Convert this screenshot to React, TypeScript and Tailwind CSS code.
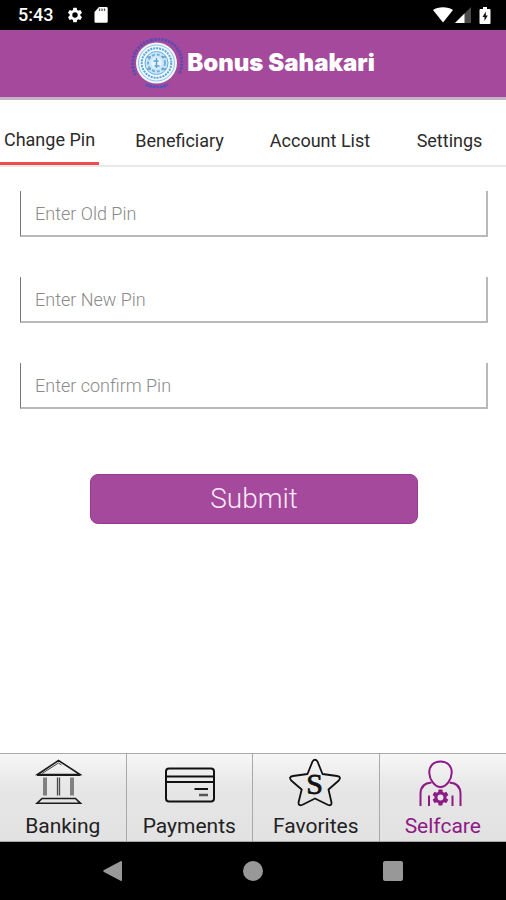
import type { ReactNode } from "react";

const tabs = ["Change Pin", "Beneficiary", "Account List", "Settings"];

const fields = [
  { id: "old-pin", label: "Enter Old Pin" },
  { id: "new-pin", label: "Enter New Pin" },
  { id: "confirm-pin", label: "Enter confirm Pin" },
];

const GEAR =
  "M19.14 12.94c.04-.3.06-.61.06-.94s-.02-.64-.07-.94l2.03-1.58a.49.49 0 0 0 .12-.61l-1.92-3.32a.49.49 0 0 0-.59-.22l-2.39.96a7 7 0 0 0-1.62-.94l-.36-2.54a.48.48 0 0 0-.48-.41h-3.84a.48.48 0 0 0-.47.41l-.36 2.54c-.59.24-1.13.57-1.62.94l-2.39-.96a.48.48 0 0 0-.59.22L2.74 8.87a.48.48 0 0 0 .12.61l2.03 1.58c-.05.3-.09.63-.09.94s.02.64.07.94l-2.03 1.58a.49.49 0 0 0-.12.61l1.92 3.32c.12.22.37.29.59.22l2.39-.96c.5.38 1.03.7 1.62.94l.36 2.54c.05.24.24.41.48.41h3.84c.24 0 .44-.17.47-.41l.36-2.54a7 7 0 0 0 1.62-.94l2.39.96c.22.08.47 0 .59-.22l1.92-3.32a.48.48 0 0 0-.12-.61zM12 15.6a3.6 3.6 0 1 1 0-7.2 3.6 3.6 0 0 1 0 7.2z";

function StatusBar() {
  return (
    <div className="flex h-[30px] items-center justify-between bg-black pr-[15px] pl-[18px] text-white">
      <div className="flex items-center">
        <span className="w-12 text-lg font-medium">5:43</span>
        <svg className="h-[18px] w-[18px]" viewBox="0 0 24 24" fill="currentColor" aria-hidden="true">
          <path d={GEAR} />
        </svg>
        <svg className="ml-[10px] h-[16px] w-[14px]" viewBox="0 0 14 16" aria-hidden="true">
          <path fill="currentColor" d="M5 0h7.500a1.200 1.200 0 0 1 1.200 1.200v13.400a1.200 1.200 0 0 1-1.200 1.200H1.700a1.200 1.200 0 0 1-1.200-1.200V5z" />
          <path stroke="#555" strokeWidth="1.300" d="M5.500 1.500v2.600M8 1.500v2.600M10.500 1.500v2.600" />
        </svg>
      </div>
      <div className="flex items-center">
        <svg className="h-[16px] w-[20px]" viewBox="0 0 20 16" fill="currentColor" aria-hidden="true">
          <path d="M10 15.500 0 3C5-.6 15-.6 20 3z" />
        </svg>
        <svg className="ml-[2px] h-[16px] w-[16px]" viewBox="0 0 16 16" aria-hidden="true">
          <path fill="#4a4a4a" d="M16 0v16H0z" />
          <path fill="currentColor" d="M9.500 6.500V16H0z" />
        </svg>
        <svg className="ml-2 h-[17px] w-[12px]" viewBox="0 0 12 17" aria-hidden="true">
          <path fill="currentColor" d="M4 0h4v2h2.500a1 1 0 0 1 1 1v13a1 1 0 0 1-1 1h-9a1 1 0 0 1-1-1V3a1 1 0 0 1 1-1H4z" />
          <path fill="#111" d="M6.800 4.500 3.500 10h2v4l3.300-5.500h-2z" />
        </svg>
      </div>
    </div>
  );
}

function Seal() {
  return (
    <svg className="h-[50px] w-[52px]" viewBox="0 0 52 50" fill="none" aria-hidden="true">
      <path d="M4.500 37A24 24 0 0 1 20 2.300" stroke="#5a4bb0" strokeWidth="3" strokeDasharray="2.200 1.300" />
      <path d="M20 2.300A23.500 23.500 0 0 1 48 36" stroke="#5a4bb0" strokeWidth="3" strokeDasharray="2.400 1.100" />
      <path d="M15 46.500a24 24 0 0 0 22 0" stroke="#4a55bd" strokeWidth="3" strokeDasharray="2.600 1" />
      <circle cx="25.500" cy="25" r="20.500" fill="#eef7fd" />
      <circle cx="25.500" cy="25" r="18" stroke="#8fc4e8" strokeWidth="1" />
      <circle cx="25.500" cy="25" r="14.800" stroke="#5ba6dc" strokeWidth="2" strokeDasharray="2 1" />
      <circle cx="25.500" cy="25" r="11.500" fill="#cde7f7" stroke="#69aede" strokeWidth="1" />
      <circle cx="25.500" cy="25" r="8.500" stroke="#6fb0de" strokeWidth="2" strokeDasharray="3 2" />
      <circle cx="25.500" cy="25" r="5.500" fill="#e4f3fb" />
      <path d="M25.500 20v10M22.500 23h5M23.500 28h5M16 19h4M31 19h4M16 31h4M31 31h4" stroke="#5c9fd6" strokeWidth="1.300" />
    </svg>
  );
}

function BankIcon() {
  return (
    <svg className="h-[50px] w-[60px]" viewBox="0 0 60 50" fill="none" stroke="#1c1c1c" aria-hidden="true">
      <path strokeWidth="1.600" d="M4.500 16.500 25.500 2.500 47 16.500z" />
      <path strokeWidth="1" stroke="#444" d="M9 15.500 25.500 5l3 2" />
      <path strokeWidth="2" d="M4 17h43.500" />
      <path strokeWidth="1.300" stroke="#4a4a4a" d="M11 19.500v18M13 19.500v18M24.500 19.500v18M26.500 19.500v18M38 19.500v18M40 19.500v18" />
      <path strokeWidth="1.600" d="M9 40.500h33.500l5 4.800H4z" />
    </svg>
  );
}

function CardIcon() {
  return (
    <svg className="h-[50px] w-[60px]" viewBox="0 0 60 50" fill="none" stroke="#111" aria-hidden="true">
      <rect x="7" y="10.500" width="48" height="33" rx="3" strokeWidth="2" />
      <path strokeWidth="2" d="M7 18.500h48M7 24h48M35.500 31H49" />
      <path stroke="#555" strokeWidth="2.500" d="M40 37h9" />
    </svg>
  );
}

function StarIcon() {
  return (
    <svg className="h-[50px] w-[60px]" viewBox="0 0 60 50" fill="none" stroke="#111" aria-hidden="true">
      <path
        strokeWidth="1.800"
        strokeLinejoin="round"
        d="M26.500 3.500q2.500-3.500 5 0l5 12.500 14.500 2q5 .8 1.500 4.800L42.500 31.500l3 13q.3 4-3.800 2.200L29 40.500l-12.500 6.200q-4 1.800-4-2.200l3.200-13L5.500 22.800q-3.500-4 1.500-4.800L21.500 16z"
      />
      <text x="28.500" y="36" textAnchor="middle" fill="#111" strokeWidth="0.800" className="font-['Liberation_Serif',serif] text-[30px]">
        S
      </text>
    </svg>
  );
}

function PersonIcon() {
  return (
    <svg className="h-[50px] w-[60px]" viewBox="0 0 60 50" fill="none" stroke="currentColor" strokeWidth="2" aria-hidden="true">
      <path d="M27.500 3.500c7.500 0 11.500 5 11.200 11.500C38.500 21.500 33.500 29 27.500 29S16.500 21.500 16.300 15C16 8.500 20 3.500 27.500 3.500z" />
      <path d="M18.500 24.500C11.500 25 7.500 29 7.500 36V48M36.500 24.500C43.500 25 47.500 29 47.500 36V48" />
      <path d="M16 37.500V48M39.500 37.500V48" />
      <g transform="translate(17.500 29.500) scale(0.830)">
        <path fill="currentColor" stroke="none" d={GEAR} />
      </g>
    </svg>
  );
}

const navItems: { label: string; icon: ReactNode; active?: boolean }[] = [
  { label: "Banking", icon: <BankIcon /> },
  { label: "Payments", icon: <CardIcon /> },
  { label: "Favorites", icon: <StarIcon /> },
  { label: "Selfcare", icon: <PersonIcon />, active: true },
];

function SystemBar() {
  return (
    <div className="flex h-[58px] items-center justify-center gap-[120px] bg-black text-[#989898]">
      <button type="button" aria-label="Back">
        <svg className="h-5 w-5" viewBox="0 0 20 20" fill="currentColor">
          <path d="M18 0q1 0 1 1v18q0 1-1 1L1 11q-1.500-1 0-2z" />
        </svg>
      </button>
      <button type="button" aria-label="Home">
        <span className="block h-5 w-5 rounded-full bg-current" />
      </button>
      <button type="button" aria-label="Overview">
        <span className="block h-5 w-5 rounded-xs bg-current" />
      </button>
    </div>
  );
}

export default function App() {
  return (
    <div className="flex min-h-screen flex-col bg-white font-[Roboto,sans-serif]">
      <StatusBar />
      <header className="flex h-[70px] items-center justify-center gap-1 border-b-3 border-[#c3b3c4] bg-[#a4499b] pb-[2px] text-white">
        <Seal />
        <h1 className="font-[Inter,sans-serif] text-2xl font-black">Bonus Sahakari</h1>
      </header>

      <nav className="grid h-[67px] grid-cols-[112fr_135fr_146fr_113fr] border-b-2 border-[#e9e9e9] text-lg text-[#2b2b2b]">
        {tabs.map((tab, i) => (
          <button
            key={tab}
            type="button"
            className={
              i === 0
                ? "w-[99px] border-b-3 border-[#ee4b4b] pt-[18px] whitespace-nowrap"
                : "pt-4 whitespace-nowrap"
            }
          >
            {tab}
          </button>
        ))}
      </nav>

      <main className="flex-1 pt-6 pr-[18px] pl-5">
        <form className="flex flex-col">
          <div className="flex flex-col gap-10">
            {fields.map((field) => (
              <input
                key={field.id}
                id={field.id}
                type="password"
                aria-label={field.label}
                placeholder={field.label}
                className="h-[46px] w-full border-r-2 border-b-2 border-l border-r-[#b9b9b9] border-b-[#b9b9b9] border-l-[#777] px-[14px] text-lg font-light outline-none placeholder:text-[#8a8a8a]"
              />
            ))}
          </div>
          <button
            type="button"
            className="mt-[65px] h-[50px] w-[70%] self-center rounded-lg border border-[#983a90] bg-[#a4499b] text-[28px] leading-10 font-light text-[#fbeafa]"
          >
            Submit
          </button>
        </form>
      </main>

      <nav className="grid h-[89px] grid-cols-4 border-y border-[#a9a9a9] bg-linear-to-b from-[#f7f7f7] via-[#e6e6e6] via-40% to-[#e2e2e2]">
        {navItems.map((item) => (
          <button
            key={item.label}
            type="button"
            className={
              item.active
                ? "flex flex-col items-center pt-1 text-[#8e1a86]"
                : "flex flex-col items-center border-r border-[#a9a9a9] pt-1 text-[#222]"
            }
          >
            {item.icon}
            <span className="text-[21px] leading-9">{item.label}</span>
          </button>
        ))}
      </nav>
      <SystemBar />
    </div>
  );
}
